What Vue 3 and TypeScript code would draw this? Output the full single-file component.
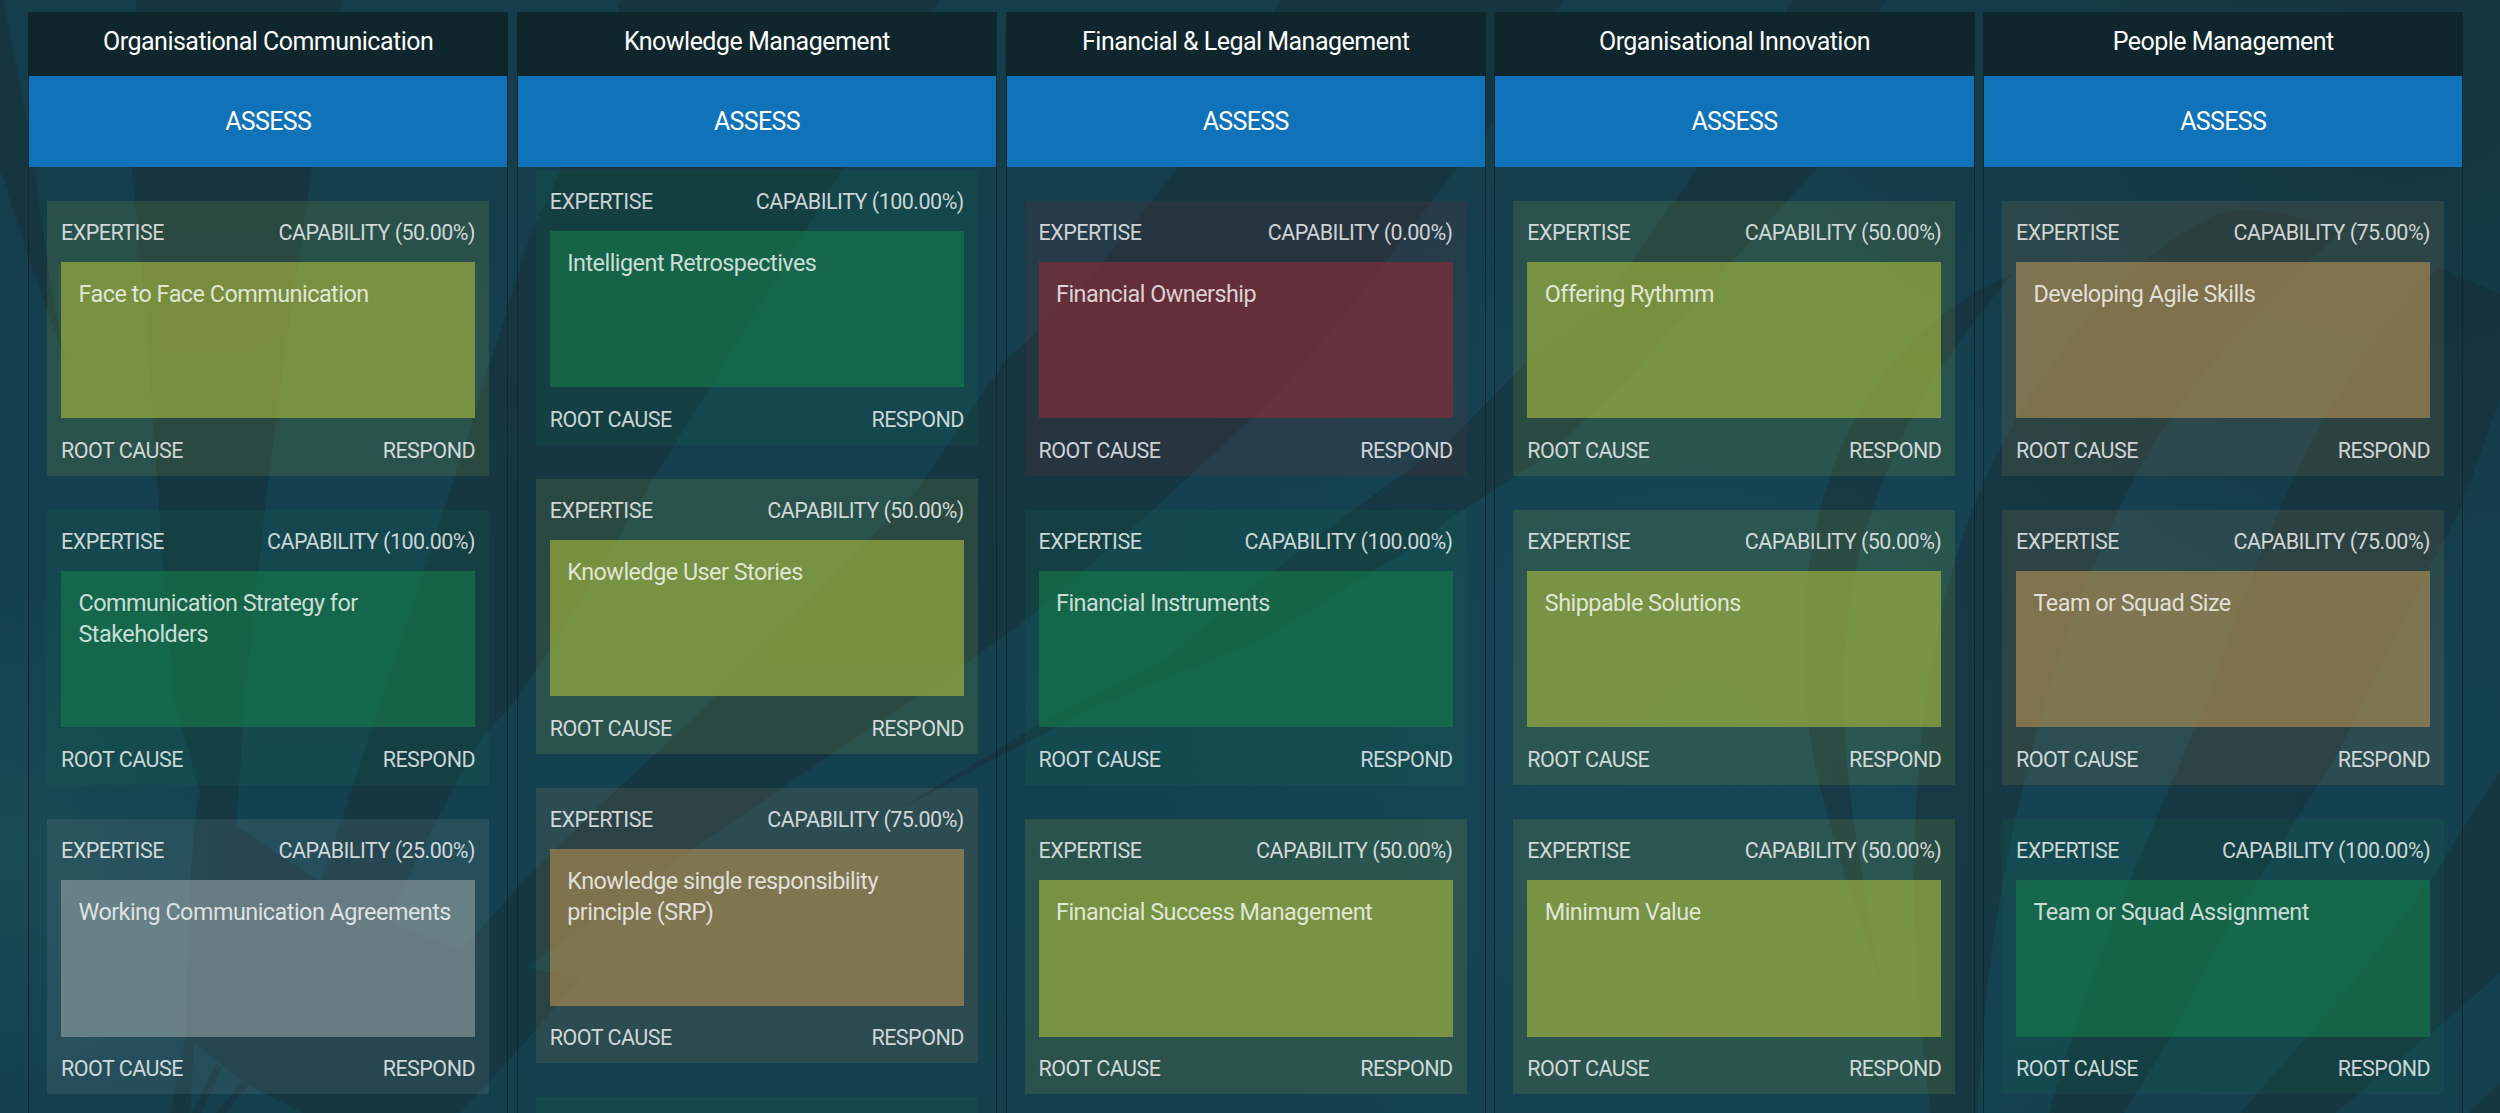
<script setup lang="ts">
type Tone = 'red' | 'grey' | 'olive' | 'brown' | 'green'

interface Card {
  title: string
  capability: string
  tone: Tone
}

interface Column {
  name: string
  scrolled?: boolean
  cards: Card[]
}

const card = (title: string, capability: string, tone: Tone): Card => ({ title, capability, tone })

const columns: Column[] = [
  {
    name: 'Organisational Communication',
    cards: [
      card('Face to Face Communication', '50.00%', 'olive'),
      card('Communication Strategy for Stakeholders', '100.00%', 'green'),
      card('Working Communication Agreements', '25.00%', 'grey'),
    ],
  },
  {
    name: 'Knowledge Management',
    scrolled: true,
    cards: [
      card('Intelligent Retrospectives', '100.00%', 'green'),
      card('Knowledge User Stories', '50.00%', 'olive'),
      card('Knowledge single responsibility principle (SRP)', '75.00%', 'brown'),
      card('', '', 'green'),
    ],
  },
  {
    name: 'Financial & Legal Management',
    cards: [
      card('Financial Ownership', '0.00%', 'red'),
      card('Financial Instruments', '100.00%', 'green'),
      card('Financial Success Management', '50.00%', 'olive'),
    ],
  },
  {
    name: 'Organisational Innovation',
    cards: [
      card('Offering Rythmm', '50.00%', 'olive'),
      card('Shippable Solutions', '50.00%', 'olive'),
      card('Minimum Value', '50.00%', 'olive'),
    ],
  },
  {
    name: 'People Management',
    cards: [
      card('Developing Agile Skills', '75.00%', 'brown'),
      card('Team or Squad Size', '75.00%', 'brown'),
      card('Team or Squad Assignment', '100.00%', 'green'),
    ],
  },
]
</script>

<template>
  <main class="board">
    <svg class="backdrop" viewBox="0 0 2500 1113" preserveAspectRatio="none" aria-hidden="true">
      <defs>
        <linearGradient id="base" x1="0" y1="0" x2="0" y2="1">
          <stop offset="0" stop-color="#153d4a" />
          <stop offset="0.3" stop-color="#143f4e" />
          <stop offset="0.7" stop-color="#144150" />
          <stop offset="1" stop-color="#14404e" />
        </linearGradient>
        <radialGradient id="corner" cx="2400" cy="40" r="620" gradientUnits="userSpaceOnUse">
          <stop offset="0" stop-color="#15333e" stop-opacity="0.8" />
          <stop offset="1" stop-color="#15333e" stop-opacity="0" />
        </radialGradient>
        <radialGradient id="glow" cx="1700" cy="740" r="620" gradientUnits="userSpaceOnUse">
          <stop offset="0" stop-color="#184758" stop-opacity="0.8" />
          <stop offset="1" stop-color="#184758" stop-opacity="0" />
        </radialGradient>
        <radialGradient id="teal" cx="0" cy="850" r="260" gradientUnits="userSpaceOnUse">
          <stop offset="0" stop-color="#1b4b55" stop-opacity="0.9" />
          <stop offset="1" stop-color="#1b4b55" stop-opacity="0" />
        </radialGradient>
      </defs>
      <rect width="2500" height="1113" fill="url(#base)" />
      <rect width="2500" height="1113" fill="url(#glow)" />
      <rect width="2500" height="1113" fill="url(#teal)" />
      <rect width="2500" height="1113" fill="url(#corner)" />
      <g class="shade">
        <path d="M0 0H3L28 127L50 280L67 367L47 310L28 257L0 167Z" />
        <path
          d="M136 0H342L312 167L292 303L267 490L245 698L236 826L321 882L454 480L531 233L562 167L621 0H940L844 167L763 300L710 387L653 479L564 627L518 698L482 738L437 819L393 908L393 924L462 950L518 887L595 810L699 713L812 598L914 494L1005 361L1072 300L1179 167L1281 0H1564L1500 113L1457 167L1380 270L1280 392L1143 519L1031 616L954 672L832 754L735 820L526 967L580 979L518 1050L460 1113H303L248 1085L194 1043L190 1113H170L185 1037L190 884L195 819L200 793L173 694L157 480L145 310L132 167Z"
        />
        <path d="M216 1063L222 1068L202 1113H192ZM242 1082L248 1086L226 1113H216Z" />
        <path
          d="M1792 0H1885L1818 167L1691 307L1631 376L1550 454L1450 518L1425 539L1265 639L1092 708L995 759L898 810L1041 723L1169 657L1214 617L1342 518L1450 440L1527 362L1597 312L1698 167Z"
        />
        <path
          d="M2014 273C1880 330 1805 460 1803 650C1803 770 1845 870 1882 990C1848 800 1840 740 1845 653C1855 500 1920 380 2014 273Z"
        />
        <path
          d="M2339 233C2280 205 2230 208 2219 214C2130 250 2050 360 2016 420C1950 530 1915 680 1914 887C1914 960 1922 1050 1931 1113H1978C1985 900 2040 660 2136 475C2200 360 2270 300 2339 233Z"
        />
        <path
          d="M2439 267L2500 294V396L2463 503L2430 567L2339 752L2223 936L2173 1034L2124 1113H2049C2090 960 2170 790 2211 690C2260 540 2330 370 2439 267Z"
        />
        <path d="M2500 770L2430 881L2347 991L2240 1113H2335L2430 1034L2500 973ZM2500 1083L2468 1113H2500Z" />
      </g>
    </svg>

    <section v-for="column in columns" :key="column.name" class="column">
      <h2 class="column-name">{{ column.name }}</h2>
      <button class="assess" type="button">ASSESS</button>
      <div class="cards" :class="{ scrolled: column.scrolled }">
        <article v-for="(item, index) in column.cards" :key="index" class="card" :class="item.tone">
          <template v-if="item.title">
            <div class="row">
              <span>EXPERTISE</span>
              <span>CAPABILITY ({{ item.capability }})</span>
            </div>
            <div class="title">{{ item.title }}</div>
            <div class="row">
              <span>ROOT CAUSE</span>
              <span>RESPOND</span>
            </div>
          </template>
        </article>
      </div>
    </section>
  </main>
</template>

<style>
body {
  margin: 0;
  background: #14404e;
}
</style>

<style scoped>
.board {
  position: relative;
  box-sizing: border-box;
  width: 2500px;
  height: 1113px;
  padding: 12px 36.6px 0 28px;
  display: grid;
  grid-template-columns: repeat(5, 1fr);
  column-gap: 8.4px;
  overflow: hidden;
  font-family: Roboto, "Liberation Sans", sans-serif;
  font-weight: 400;
  letter-spacing: -0.52px;
  color: #fff;
}

.backdrop {
  position: absolute;
  inset: 0;
  width: 100%;
  height: 100%;
}

.shade {
  fill: #16282f;
  fill-opacity: 0.39;
}

.column {
  position: relative;
  display: flex;
  flex-direction: column;
  height: 1110px;
  min-width: 0;
  border: solid #10272d;
  border-width: 0 1px;
}

.column-name {
  flex: none;
  margin: 0 -1px;
  height: 64px;
  box-sizing: border-box;
  padding-top: 15px;
  background: #0e262c;
  font-size: 25px;
  line-height: 30px;
  font-weight: inherit;
  text-align: center;
}

.assess {
  flex: none;
  height: 90.5px;
  margin: 0;
  padding: 1px 0 0;
  border: 0;
  background: #1072b9;
  color: #fff;
  font: 400 25px/30px Roboto, "Liberation Sans", sans-serif;
  letter-spacing: -0.65px;
}

.cards {
  flex: 1;
  min-height: 0;
  overflow: hidden;
  padding: 34.5px 18.3px 0 18px;
  display: flex;
  flex-direction: column;
  gap: 34.5px;
}

.cards.scrolled {
  padding-top: 3.5px;
}

.card {
  --tone: 23, 123, 75;
  flex: none;
  box-sizing: border-box;
  height: 274.6px;
  padding: 0 14px;
  background: rgba(var(--tone), 0.15);
  color: rgba(255, 255, 255, 0.78);
}

.card.red {
  --tone: 138, 45, 53;
}

.card.grey {
  --tone: 143, 158, 159;
}

.card.olive {
  --tone: 168, 186, 62;
}

.card.brown {
  --tone: 178, 144, 82;
}

.row {
  box-sizing: border-box;
  display: flex;
  justify-content: space-between;
  height: 61px;
  padding-top: 2px;
  align-items: center;
  font-size: 21.5px;
  line-height: 26px;
  white-space: nowrap;
}

.title {
  box-sizing: border-box;
  height: 156.4px;
  padding: 17px 17.5px;
  background: rgba(var(--tone), 0.62);
  font-size: 23.4px;
  line-height: 31.25px;
}

.row:last-child {
  height: 63px;
}
</style>
